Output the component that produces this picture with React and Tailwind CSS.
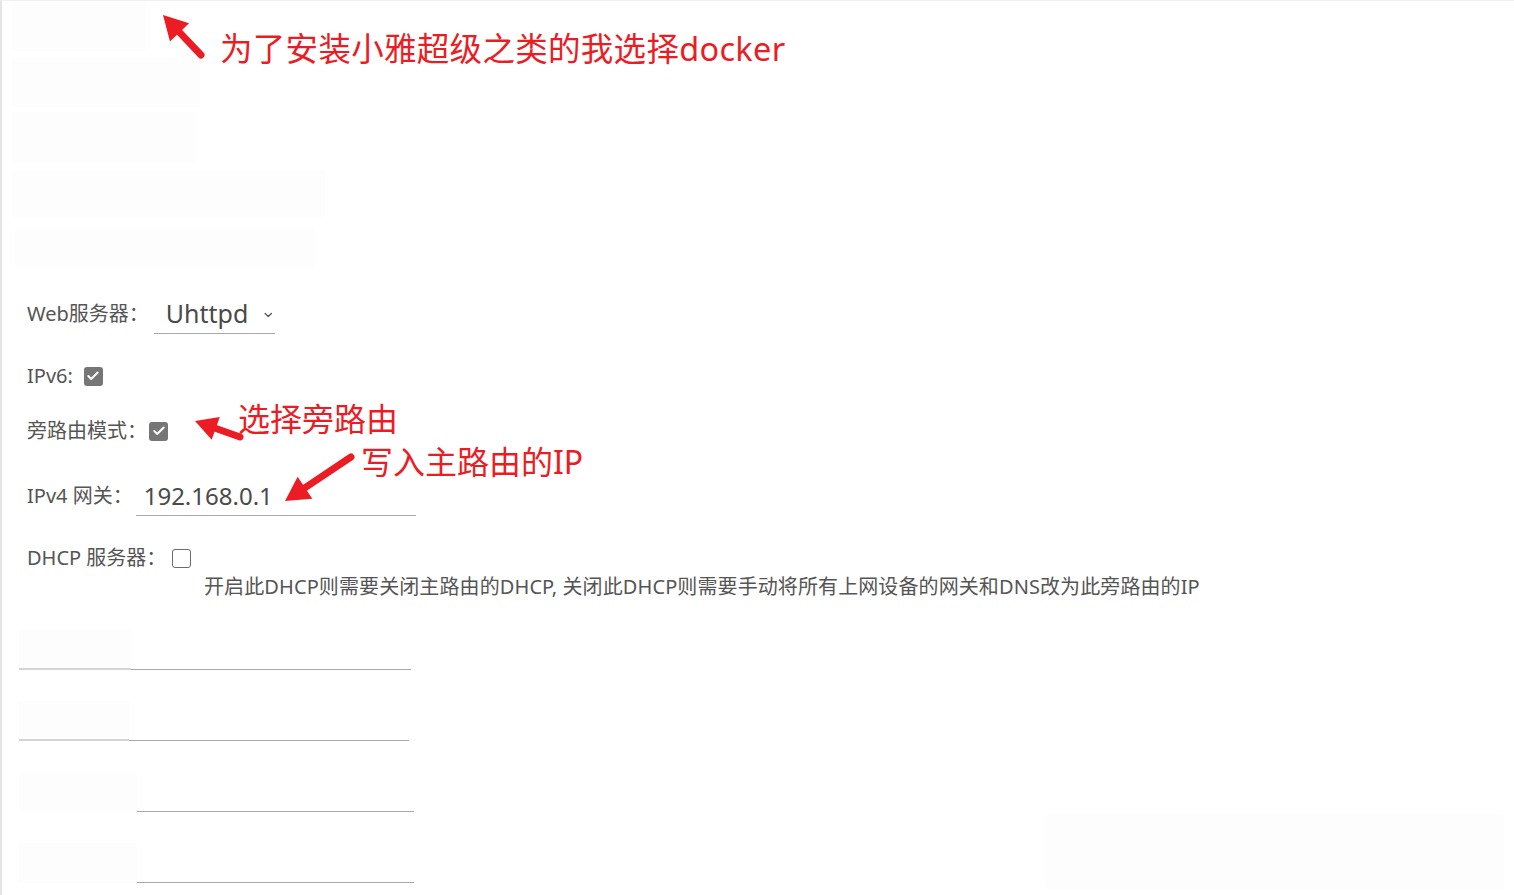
import { ChevronDown, Check } from "lucide-react";

/* ------------------------------------------------------------------ */
/* SMALL PIECES */
/* ------------------------------------------------------------------ */

function Box({ checked }) {
  if (checked) {
    return (
      <span className="inline-flex w-[19px] h-[19px] rounded-[3px] bg-[#767676] items-center justify-center text-white">
        <Check size={14} strokeWidth={3.5} />
      </span>
    );
  }
  return (
    <span className="inline-block w-[19px] h-[19px] rounded-[3px] border border-[#6b6b6b] bg-white" />
  );
}

function Arrow({ tip, tail, head = 24 }) {
  const [x1, y1] = tip;
  const [x2, y2] = tail;
  const len = Math.hypot(x2 - x1, y2 - y1);
  const ux = (x2 - x1) / len;
  const uy = (y2 - y1) / len;
  const bx = x1 + ux * head;
  const by = y1 + uy * head;
  const w = head * 0.55;
  const p = `${x1},${y1} ${bx - uy * w},${by + ux * w} ${bx + uy * w},${by - ux * w}`;
  return (
    <g>
      <line x1={bx - ux * 2} y1={by - uy * 2} x2={x2} y2={y2} stroke="#ec1c24" strokeWidth="7" strokeLinecap="round" />
      <polygon points={p} fill="#ec1c24" />
    </g>
  );
}

function BlurRow({ w, line = 280, shadow }) {
  return (
    <div className="flex items-end h-[40px]">
      <div
        className={`h-[40px] bg-[#fdfdfd] ${shadow ? "border-b-2 border-[#d4d4d4]" : ""}`}
        style={{ width: w }}
      />
      <div className="border-b border-[#a9a9a9]" style={{ width: line }} />
    </div>
  );
}

/* ------------------------------------------------------------------ */
/* PAGE */
/* ------------------------------------------------------------------ */

export default function App() {
  return (
    <div
      className="relative w-[1514px] h-[895px] overflow-hidden bg-white border-l-2 border-t border-l-[#e4e4e4] border-t-[#f1f1f1] text-[#555] text-[20px]"
      style={{ fontFamily: '"Noto Sans", "Noto Sans CJK SC", sans-serif' }}
    >
      {/* FAINT TOP BLOCKS */}
      <div className="flex flex-col pl-[10px]">
        <div className="w-[133px] h-[50px] bg-[#fdfdfd]" />
        <div className="w-[188px] h-[50px] bg-[#fdfdfd] mt-[6px]" />
        <div className="w-[183px] h-[50px] bg-[#fdfdfd] mt-[5px]" />
        <div className="w-[313px] h-[47px] bg-[#fdfdfd] mt-[8px]" />
        <div className="w-[300px] h-[40px] bg-[#fdfdfd] mt-[11px] ml-[3px]" />
      </div>

      {/* FORM */}
      <div className="flex flex-col pl-[25px] mt-[26px]">
        <div className="flex items-center h-[40px]">
          <span>Web服务器：</span>
          <div className="ml-[5px] w-[121px] h-[40px] border-b border-[#a9a9a9] flex items-center pl-[12px] gap-[14px]">
            <span className="text-[25px] text-[#4a4a4a]">Uhttpd</span>
            <ChevronDown size={14} strokeWidth={2.5} className="text-[#555] mt-[2px]" />
          </div>
        </div>

        <div className="flex items-center h-[30px] mt-[27px] gap-[11px]">
          <span>IPv6:</span>
          <Box checked />
        </div>

        <div className="flex items-center h-[30px] mt-[25px] gap-[2px]">
          <span>旁路由模式：</span>
          <Box checked />
        </div>

        <div className="flex items-center h-[40px] mt-[30px]">
          <span>IPv4 网关：</span>
          <div className="ml-[3px] w-[280px] h-[40px] border-b border-[#a9a9a9] flex items-center pl-[8px]">
            <span className="text-[24px] text-[#4a4a4a]">192.168.0.1</span>
          </div>
        </div>

        <div className="flex items-center h-[30px] mt-[27px] gap-[6px]">
          <span>DHCP 服务器：</span>
          <Box />
        </div>
        <div className="pl-[177px] leading-[28px] tracking-[0.1px]">
          开启此DHCP则需要关闭主路由的DHCP, 关闭此DHCP则需要手动将所有上网设备的网关和DNS改为此旁路由的IP
        </div>

        <div className="flex flex-col gap-[31px] mt-[29px] -ml-[8px]">
          <BlurRow w={112} shadow />
          <BlurRow w={110} shadow />
          <BlurRow w={118} line={277} />
          <BlurRow w={118} line={277} />
        </div>
      </div>

      {/* FAINT BOTTOM RIGHT BLOCK */}
      <div className="absolute left-[1043px] top-[813px] w-[459px] h-[75px] bg-[#fdfdfd] rounded-[4px]" />

      {/* ANNOTATIONS */}
      <svg className="absolute inset-0 pointer-events-none" width="1514" height="895">
        <Arrow tip={[161, 14]} tail={[199, 54]} />
        <Arrow tip={[193, 420]} tail={[238, 436]} head={22} />
        <Arrow tip={[283, 500]} tail={[349, 456]} head={24} />
      </svg>
      <div className="absolute left-[218px] top-[26px] text-[32.5px] leading-[44px] text-[#ec1c24] tracking-[0.3px]">
        为了安装小雅超级之类的我选择docker
      </div>
      <div className="absolute left-[236px] top-[396px] text-[32px] leading-[44px] text-[#ec1c24]">
        选择旁路由
      </div>
      <div className="absolute left-[359px] top-[439px] text-[32px] leading-[44px] text-[#ec1c24]">
        写入主路由的IP
      </div>
    </div>
  );
}
